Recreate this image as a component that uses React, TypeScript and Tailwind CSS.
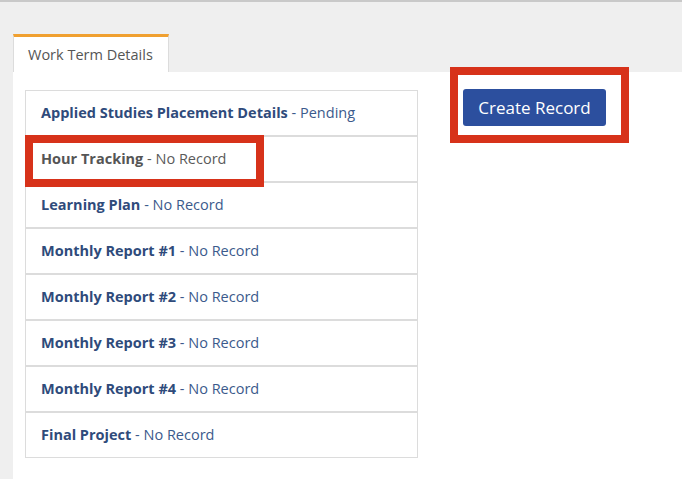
const rows = [
  { title: 'Applied Studies Placement Details', status: 'Pending' },
  { title: 'Hour Tracking', status: 'No Record', muted: true },
  { title: 'Learning Plan', status: 'No Record' },
  { title: 'Monthly Report #1', status: 'No Record' },
  { title: 'Monthly Report #2', status: 'No Record' },
  { title: 'Monthly Report #3', status: 'No Record' },
  { title: 'Monthly Report #4', status: 'No Record' },
  { title: 'Final Project', status: 'No Record' },
];

export default function App() {
  return (
    <div
      className="relative flex h-[479px] w-full flex-col overflow-hidden border-t-2 border-[#c9c9c9] bg-[#efefef]"
      style={{ fontFamily: '"Open Sans", "Noto Sans", sans-serif' }}
    >
      <div className="pl-[13px] pt-[32px]">
        <div className="flex h-[38px] w-[156px] items-center border-x border-t-[3px] border-x-[#dcdcdc] border-t-[#f0a030] bg-white pl-[14px] text-[14.5px] text-[#555]">
          Work Term Details
        </div>
      </div>

      <div className="ml-[13px] flex flex-1 items-start gap-[45px] bg-white pl-[12px] pt-[18px]">
        <div className="w-[393px]">
          {rows.map((r) => (
            <div
              key={r.title}
              className="flex h-[46px] items-center border border-[#dcdcdc] pl-[15px] text-[14.5px]"
            >
              <span className={r.muted ? 'text-[#5a5a5a]' : 'text-[#3b5a8c]'}>
                <span className={r.muted ? 'font-bold text-[#555]' : 'font-bold text-[#2f4b7b]'}>{r.title}</span>
                {' - '}
                {r.status}
              </span>
            </div>
          ))}
        </div>

        <button className="-mt-px h-[37px] w-[143px] rounded-[3px] bg-[#2c4f9e] text-[17px] text-white">
          Create Record
        </button>
      </div>

      {/* annotation overlays */}
      <div className="pointer-events-none absolute left-[25px] top-[133px] h-[52px] w-[239px] border-[8px] border-[#d7321a]" />
      <div className="pointer-events-none absolute left-[450px] top-[65px] h-[76px] w-[179px] border-[8px] border-[#d7321a]" />
    </div>
  );
}
